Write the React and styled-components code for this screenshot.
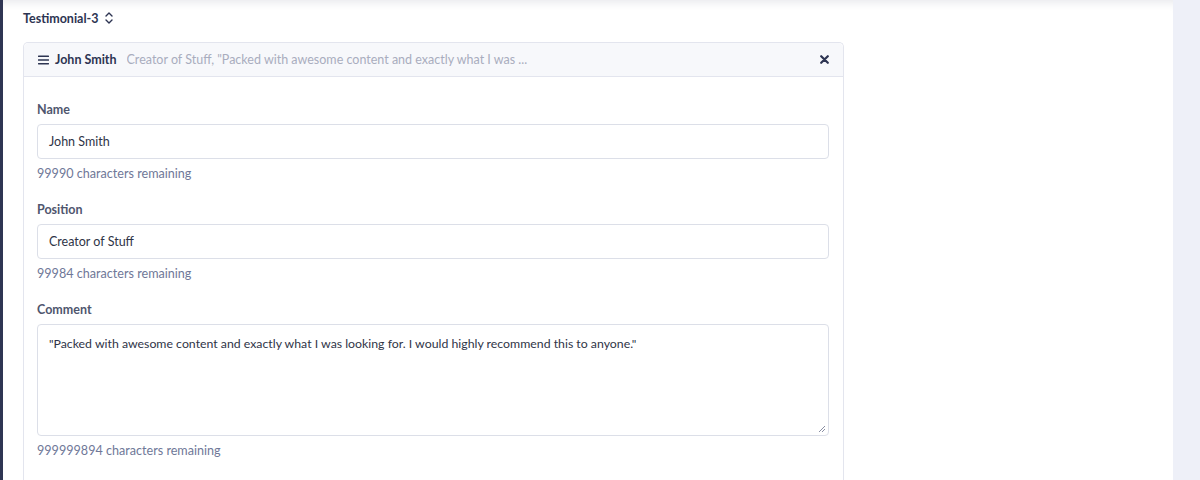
import React from "react";
import styled, { createGlobalStyle } from "styled-components";

const GlobalStyle = createGlobalStyle`
  html, body {
    margin: 0;
    padding: 0;
    background: #ffffff;
    font-family: "Lato", "Open Sans", sans-serif;
  }
  * { box-sizing: border-box; }
`;

const Page = styled.div`
  display: flex;
  width: 1200px;
  height: 480px;
  overflow: hidden;
`;

const LeftStrip = styled.div`
  width: 3px;
  background: #2f3553;
  flex-shrink: 0;
`;

const Main = styled.div`
  flex: 1;
  background: #ffffff;
  box-shadow: inset 0 10px 10px -8px rgba(45, 52, 82, 0.12);
  padding: 8px 0 0 20px;
  overflow: hidden;
`;

const RightPanel = styled.div`
  width: 27px;
  flex-shrink: 0;
  background: #eef0f8;
`;

const TitleRow = styled.div`
  display: flex;
  align-items: center;
  gap: 6px;
  height: 20px;
  font-size: 12.5px;
  font-weight: 700;
  color: #2d3452;
`;

const Card = styled.div`
  width: 821px;
  min-height: 520px;
  margin-top: 14px;
  border: 1px solid #e3e5ee;
  border-bottom: none;
  border-radius: 5px 5px 0 0;
  background: #ffffff;
`;

const CardHeader = styled.div`
  display: flex;
  align-items: center;
  height: 34px;
  padding: 0 14px 0 14px;
  background: #f7f8fb;
  border-bottom: 1px solid #e3e5ee;
  border-radius: 5px 5px 0 0;
  font-size: 12.5px;
`;

const HeaderName = styled.span`
  font-weight: 700;
  color: #2d3452;
  margin-left: 6px;
`;

const HeaderSummary = styled.span`
  color: #a9adbe;
  margin-left: 10px;
  flex: 1;
  white-space: nowrap;
  overflow: hidden;
`;

const CloseButton = styled.span`
  display: flex;
  align-items: center;
  color: #2d3452;
`;

const CardBody = styled.div`
  padding: 24px 14px 0 13px;
`;

const Field = styled.div`
  margin-bottom: 18px;
`;

const Label = styled.div`
  font-size: 12.5px;
  font-weight: 700;
  color: #4f566e;
  line-height: 18px;
  margin-bottom: 5px;
`;

const TextInput = styled.div`
  height: 35px;
  border: 1px solid #dcdfe8;
  border-radius: 4px;
  padding: 0 11px;
  display: flex;
  align-items: center;
  font-size: 12.5px;
  color: #2f3447;
`;

const TextArea = styled.div`
  position: relative;
  height: 112px;
  border: 1px solid #dcdfe8;
  border-radius: 4px;
  padding: 10px 11px;
  font-size: 12.3px;
  color: #2f3447;
  line-height: 18px;
`;

const Grip = styled.svg`
  position: absolute;
  right: 2px;
  bottom: 2px;
`;

const Hint = styled.div`
  font-size: 12.6px;
  color: #6f7898;
  line-height: 18px;
  margin-top: 6px;
`;

const SortIcon = () => (
  <svg width="10" height="16" viewBox="0 0 10 16" fill="none" stroke="#2d3452" strokeWidth="1.4" strokeLinecap="round" strokeLinejoin="round">
    <path d="M2 6 L5 3 L8 6" />
    <path d="M2 10 L5 13 L8 10" />
  </svg>
);

const MenuIcon = () => (
  <svg width="11" height="10" viewBox="0 0 11 10" fill="#2d3452">
    <rect x="0" y="0.5" width="11" height="1.6" rx="0.4" />
    <rect x="0" y="4.2" width="11" height="1.6" rx="0.4" />
    <rect x="0" y="7.9" width="11" height="1.6" rx="0.4" />
  </svg>
);

const CloseIcon = () => (
  <svg width="9" height="9" viewBox="0 0 9 9" stroke="#2d3452" strokeWidth="2.2" strokeLinecap="round">
    <path d="M1.2 1.2 L7.8 7.8 M7.8 1.2 L1.2 7.8" />
  </svg>
);

const fields = [
  { label: "Name", value: "John Smith", hint: "99990 characters remaining" },
  { label: "Position", value: "Creator of Stuff", hint: "99984 characters remaining" },
];

export default function App() {
  return (
    <>
      <GlobalStyle />
      <Page>
        <LeftStrip />
        <Main>
          <TitleRow>
            Testimonial-3
            <SortIcon />
          </TitleRow>
          <Card>
            <CardHeader>
              <MenuIcon />
              <HeaderName>John Smith</HeaderName>
              <HeaderSummary>
                Creator of Stuff, "Packed with awesome content and exactly what I was ...
              </HeaderSummary>
              <CloseButton>
                <CloseIcon />
              </CloseButton>
            </CardHeader>
            <CardBody>
              {fields.map((f) => (
                <Field key={f.label}>
                  <Label>{f.label}</Label>
                  <TextInput>{f.value}</TextInput>
                  <Hint>{f.hint}</Hint>
                </Field>
              ))}
              <Field>
                <Label>Comment</Label>
                <TextArea>
                  "Packed with awesome content and exactly what I was looking for. I would highly recommend this to anyone."
                  <Grip width="9" height="9" viewBox="0 0 9 9" stroke="#8a8fa3" strokeWidth="1">
                    <path d="M8 2 L2 8 M8 5 L5 8" />
                  </Grip>
                </TextArea>
                <Hint>999999894 characters remaining</Hint>
              </Field>
            </CardBody>
          </Card>
        </Main>
        <RightPanel />
      </Page>
    </>
  );
}
